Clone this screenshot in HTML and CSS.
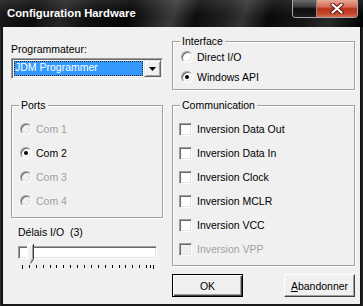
FILE: index.html
```html
<!DOCTYPE html>
<html lang="fr">
<head>
<meta charset="utf-8">
<title>Configuration Hardware</title>
<link rel="stylesheet" href="styles.css">
</head>
<body>
<div class="window">
  <div class="titlebar">
    <span class="title">Configuration Hardware</span>
    <div class="caption">
      <div class="cbtn cbtn-min"></div>
      <div class="cbtn cbtn-close">
        <svg width="14" height="11" viewBox="0 0 14 11">
          <path d="M2.5 1.5 L11.5 9.5 M11.5 1.5 L2.5 9.5" stroke="#5a1508" stroke-width="4.2" stroke-linecap="round" fill="none"/>
          <path d="M2.5 1.5 L11.5 9.5 M11.5 1.5 L2.5 9.5" stroke="#fff" stroke-width="2.2" stroke-linecap="round" fill="none"/>
        </svg>
      </div>
    </div>
  </div>
  <div class="client">
    <div class="col col-left">
      <div class="label">Programmateur:</div>
      <div class="select">
        <div class="select-value">JDM Programmer</div>
        <div class="select-btn">
          <svg width="7" height="4" viewBox="0 0 7 4"><path d="M0 0 H7 L3.5 4 Z" fill="#000"/></svg>
        </div>
      </div>
      <div class="group group-ports">
        <div class="group-title">Ports</div>
        <div class="opt disabled"><span class="radio"></span><span>Com 1</span></div>
        <div class="opt"><span class="radio checked"></span><span>Com 2</span></div>
        <div class="opt disabled"><span class="radio"></span><span>Com 3</span></div>
        <div class="opt disabled"><span class="radio"></span><span>Com 4</span></div>
      </div>
      <div class="delay-label">Délais I/O&nbsp;&nbsp;(3)</div>
      <div class="slider">
        <div class="track"></div>
        <svg class="thumb" width="7" height="20" viewBox="0 0 7 20">
          <path d="M0.5 0.5 H6.5 V15 L3.5 19 L0.5 15 Z" fill="#f0f0f0"/>
          <path d="M0.5 15 V0.5 H6" stroke="#fff" fill="none"/>
          <path d="M6.5 0 V15 L3.5 19.5" stroke="#404040" fill="none"/>
          <path d="M5.5 1 V14.5 L3.5 17.5" stroke="#a0a0a0" fill="none"/>
        </svg>
        <svg class="ticks" width="139" height="4" viewBox="0 0 139 4">
          <path d="M4.5 0 V4 M11.5 0 V3 M18.5 0 V3 M25.5 0 V3 M32.5 0 V3 M38.5 0 V3 M45.5 0 V3 M52.5 0 V3 M59.5 0 V3 M66.5 0 V3 M73.5 0 V3 M80.5 0 V3 M87.5 0 V3 M94.5 0 V3 M101.5 0 V3 M107.5 0 V3 M114.5 0 V3 M121.5 0 V3 M128.5 0 V3 M132.5 0 V3 M135.5 0 V4" stroke="#000" stroke-width="1" fill="none"/>
        </svg>
      </div>
    </div>
    <div class="col col-right">
      <div class="group group-iface">
        <div class="group-title">Interface</div>
        <div class="opt opt-sm"><span class="radio"></span><span>Direct I/O</span></div>
        <div class="opt opt-sm"><span class="radio checked"></span><span>Windows API</span></div>
      </div>
      <div class="group group-comm">
        <div class="group-title">Communication</div>
        <div class="opt"><span class="check"></span><span>Inversion Data Out</span></div>
        <div class="opt"><span class="check"></span><span>Inversion Data In</span></div>
        <div class="opt"><span class="check"></span><span>Inversion Clock</span></div>
        <div class="opt"><span class="check"></span><span>Inversion MCLR</span></div>
        <div class="opt"><span class="check"></span><span>Inversion VCC</span></div>
        <div class="opt disabled"><span class="check"></span><span>Inversion VPP</span></div>
      </div>
      <div class="buttons">
        <div class="btn btn-default">OK</div>
        <div class="btn"><span class="ul">A</span>bandonner</div>
      </div>
    </div>
  </div>
</div>
</body>
</html>
```
FILE: styles.css
```css
* { box-sizing: border-box; }
html, body { margin: 0; padding: 0; }
body {
  width: 363px;
  height: 306px;
  overflow: hidden;
  font-family: "Liberation Sans", Arial, sans-serif;
  font-size: 10.5px;
  color: #000;
}

.window {
  width: 363px;
  height: 306px;
  display: flex;
  flex-direction: column;
  background: linear-gradient(90deg, #3a3a3a 0, #0a0a0a 2px, #1a1a1a 3px, #1a1a1a 360px, #0a0a0a 361px, #333 363px);
}

.titlebar {
  height: 27px;
  flex: none;
  display: flex;
  justify-content: space-between;
  align-items: flex-start;
  background:
    linear-gradient(to bottom, rgba(255,255,255,0.10), rgba(255,255,255,0.02) 45%, rgba(0,0,0,0) 60%),
    linear-gradient(108deg, #1a1a1a 0%, #0c0c0c 10%, #262626 18%, #0e0e0e 26%, #050505 36%, #2a2a2a 44%, #3a3a3a 48%, #0d0d0d 54%, #202020 62%, #343434 67%, #0a0a0a 74%, #181818 84%, #2a2a2a 90%, #000 100%);
}

.title {
  color: #fff;
  font-weight: bold;
  font-size: 11.3px;
  line-height: 14px;
  margin: 6px 0 0 7px;
}

.caption {
  display: flex;
  margin-right: 5px;
  height: 18px;
  border: 1px solid #a8a8a8;
  border-top: none;
  border-radius: 0 0 4px 4px;
  overflow: hidden;
}
.cbtn-min {
  width: 24px;
  border-right: 1px solid #8a8a8a;
  background: linear-gradient(#6a6a6a, #3a3a3a 40%, #0e0e0e 52%, #1c1c1c 100%);
}
.cbtn-close {
  width: 40px;
  display: flex;
  align-items: center;
  justify-content: center;
  background: linear-gradient(#e8a898, #d86a58 40%, #b8321c 52%, #c4482e 80%, #d86a50 100%);
}

.client {
  flex: 1;
  margin: 0 3px 2px 3px;
  background: #f0f0f0;
  display: flex;
  gap: 9px;
  padding: 0 5px 0 8px;
}

.col { display: flex; flex-direction: column; }
.col-left { width: 152px; padding-top: 16px; }
.col-right { width: 183px; padding-top: 14px; }

.label { line-height: 13px; height: 13px; }

.select {
  margin-top: 2px;
  height: 21px;
  display: flex;
  border: 1px solid;
  border-color: #a0a0a0 #fff #fff #a0a0a0;
  box-shadow: inset 1px 1px #696969, inset -1px -1px #e3e3e3;
  background: #fff;
  padding: 1px;
}
.select-value {
  flex: 1;
  margin: 1px 1px 1px 1px;
  background: #3399ff;
  color: #fff;
  line-height: 13px;
  padding-left: 1px;
  outline: 1px dotted #202020;
  outline-offset: -1px;
}
.select-btn {
  width: 17px;
  border: 1px solid;
  border-color: #e3e3e3 #696969 #696969 #e3e3e3;
  box-shadow: inset 1px 1px #fff, inset -1px -1px #a0a0a0;
  background: #f0f0f0;
  display: flex;
  align-items: center;
  justify-content: center;
}

.group {
  border: 1px solid #a0a0a0;
  box-shadow: inset 1px 1px #fff, 1px 1px #fff;
  padding: 0 0 4px 6px;
}
.group-title {
  width: fit-content;
  margin: -7px 0 5px 1px;
  padding: 0 2px;
  background: #f0f0f0;
  line-height: 13px;
  height: 13px;
}
.group-ports { margin-top: 26px; }
.group-iface { padding-bottom: 2px; }
.group-iface .group-title { margin-bottom: -1px; }
.group-comm { margin-top: 15px; }

.opt {
  display: flex;
  align-items: center;
  gap: 5px;
  height: 24px;
}
.opt-sm { height: 20px; }
.opt.disabled { color: #a0a0a0; }

.radio {
  position: relative;
  width: 12px;
  height: 12px;
  margin-left: 2px;
  margin-right: -1px;
  border-radius: 50%;
  border: 1px solid;
  border-color: #a0a0a0 #fff #fff #a0a0a0;
  box-shadow: inset 1px 1px #696969, inset -1px -1px #e3e3e3;
  background: #fff;
}
.disabled .radio { background: #f0f0f0; }
.radio.checked::after {
  content: "";
  position: absolute;
  left: 3px;
  top: 3px;
  width: 4px;
  height: 4px;
  border-radius: 50%;
  background: #000;
}

.check {
  width: 13px;
  height: 13px;
  border: 1px solid;
  border-color: #a0a0a0 #fff #fff #a0a0a0;
  box-shadow: inset 1px 1px #696969, inset -1px -1px #e3e3e3;
  background: #fff;
}
.disabled .check { background: #f0f0f0; }

.delay-label {
  margin-top: 8px;
  padding-left: 7px;
  line-height: 13px;
  height: 13px;
}

.slider {
  position: relative;
  margin: 7px 0 0 7px;
  width: 139px;
}
.track {
  height: 13px;
  border: 1px solid;
  border-color: #a0a0a0 #fff #fff #a0a0a0;
  box-shadow: inset 1px 1px #696969, inset -1px -1px #e3e3e3;
  background: #fff;
}
.thumb {
  position: absolute;
  left: 9px;
  top: -2px;
}
.ticks {
  display: block;
  margin-top: 6px;
}

.buttons {
  margin-top: 8px;
  display: flex;
  justify-content: space-between;
}
.btn {
  width: 71px;
  height: 23px;
  display: flex;
  align-items: center;
  justify-content: center;
  background: #f0f0f0;
  border: 1px solid;
  border-color: #fff #404040 #404040 #fff;
  box-shadow: inset -1px -1px #a0a0a0;
}
.btn-default {
  border-color: #000;
  box-shadow: inset 1px 1px #fff, inset -1px -1px #404040, inset -2px -2px #a0a0a0;
}
.ul { text-decoration: underline; }
```
